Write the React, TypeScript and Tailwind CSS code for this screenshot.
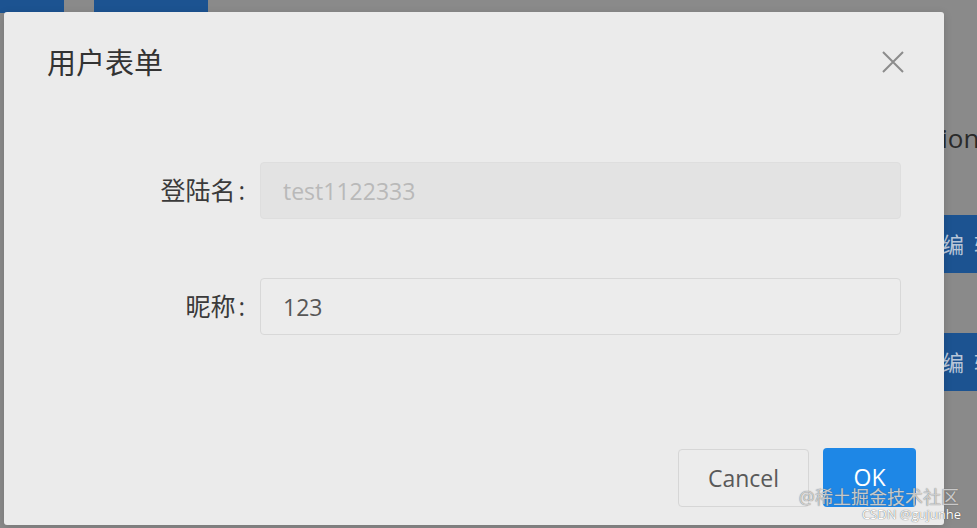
import { useState } from 'react'

const font = { fontFamily: '"Open Sans", "Noto Sans CJK SC", sans-serif' }

function Field({ label, value, disabled }: { label: string; value: string; disabled?: boolean }) {
  return (
    <div className="flex items-center">
      <label className="w-[242px] shrink-0 text-right text-[25px] text-[#3a3a3a] leading-none">
        {label}
        <span className="ml-[3px] mr-[1px]">:</span>
      </label>
      <input
        className={
          disabled
            ? 'ml-[14px] h-[57px] flex-1 rounded-[4px] border border-[#dedede] bg-[#e3e3e3] px-[22px] text-[23px] text-[#b9b9b9] outline-none'
            : 'ml-[14px] h-[57px] flex-1 rounded-[4px] border border-[#d8d8d8] bg-[#ececec] px-[22px] text-[23px] text-[#575757] outline-none'
        }
        style={font}
        value={value}
        disabled={disabled}
        readOnly
      />
    </div>
  )
}

export default function App() {
  const [nick] = useState('123')

  return (
    <div className="relative h-[528px] w-[977px] overflow-hidden bg-[#8a8a8a]" style={font}>
      {/* page behind the mask */}
      <div className="flex gap-[30px]">
        <div className="h-[13px] w-[64px] bg-[#1c5391]" />
        <div className="h-[13px] w-[114px] bg-[#1c5391]" />
      </div>
      <div className="ml-[932px] mt-[112px] flex w-[120px] flex-col items-start">
        <span className="whitespace-nowrap text-[26px] leading-none text-[#2a2a2a]">tion</span>
        <div className="mt-[64px] flex h-[58px] w-[100px] items-center whitespace-nowrap bg-[#1c5391] pl-[10px] text-[22px] tracking-[10px] text-[#b8c6d8]">
          编辑
        </div>
        <div className="mt-[60px] flex h-[58px] w-[100px] items-center whitespace-nowrap bg-[#1c5391] pl-[10px] text-[22px] tracking-[10px] text-[#b8c6d8]">
          编辑
        </div>
      </div>

      {/* modal */}
      <div className="absolute left-[4px] top-[12px] flex h-[513px] w-[940px] flex-col rounded-[3px] bg-[#ebebeb] shadow-[0_2px_8px_rgba(0,0,0,0.15)]">
        <div className="flex h-[100px] items-center justify-between pl-[43px] pr-[40px]">
          <h2 className="text-[29px] leading-none text-[#333]">用户表单</h2>
          <button className="flex h-[22px] w-[22px] items-center justify-center">
            <svg width="22" height="22" viewBox="0 0 22 22" fill="none" stroke="#8c8c8c" strokeWidth="2">
              <path d="M1 1L21 21M21 1L1 21" />
            </svg>
          </button>
        </div>

        <div className="flex flex-col gap-[59px] pl-0 pr-[43px] pt-[50px]">
          <Field label="登陆名" value="test1122333" disabled />
          <Field label="昵称" value={nick} />
        </div>

        <div className="flex flex-1 items-end justify-end gap-[14px] pb-[18px] pr-[28px]">
          <button className="h-[58px] w-[131px] rounded-[4px] border border-[#d6d6d6] bg-[#ececec] text-[23px] text-[#595959]">
            Cancel
          </button>
          <button className="h-[59px] w-[93px] rounded-[4px] bg-[#1e87e6] text-[23px] text-white">OK</button>
        </div>
      </div>

      {/* watermark */}
      <div className="absolute right-[18px] top-[487px] flex flex-col items-end leading-none">
        <span className="text-[18px] leading-[20px] text-[#e8e8e8]/80 [text-shadow:0_0_1px_#555]">@稀土掘金技术社区</span>
        <span className="mr-[-2px] text-[13px] leading-[14px] text-white [text-shadow:0_0_1px_#333]">CSDN @gujunhe</span>
      </div>
    </div>
  )
}
